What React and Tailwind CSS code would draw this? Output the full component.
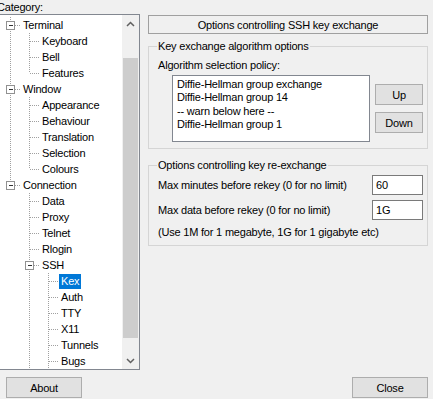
import React from 'react'

const DOT = '#a0a0a0'

// one 19x16 indent cell of the tree: I = straight, T = branch, L = last branch
function Guide({ kind, expander }) {
  const down = kind === 'L' ? 8 : 16
  return (
    <svg width="19" height="16" viewBox="0 0 19 16" className="shrink-0" shapeRendering="crispEdges">
      {kind !== ' ' && (
        <line x1="9.5" y1="0" x2="9.5" y2={down} stroke={DOT} strokeDasharray="1 1" />
      )}
      {(kind === 'T' || kind === 'L') && (
        <line x1="10" y1="8.5" x2="19" y2="8.5" stroke={DOT} strokeDasharray="1 1" />
      )}
      {expander && (
        <g>
          <rect x="5.5" y="4.5" width="8" height="8" fill="#ffffff" stroke="#919191" />
          <line x1="7.5" y1="8.5" x2="11.5" y2="8.5" stroke="#333333" />
        </g>
      )}
    </svg>
  )
}

const rows = [
  { g: ['T'], label: 'Terminal', exp: true },
  { g: ['I', 'T'], label: 'Keyboard' },
  { g: ['I', 'T'], label: 'Bell' },
  { g: ['I', 'L'], label: 'Features' },
  { g: ['T'], label: 'Window', exp: true },
  { g: ['I', 'T'], label: 'Appearance' },
  { g: ['I', 'T'], label: 'Behaviour' },
  { g: ['I', 'T'], label: 'Translation' },
  { g: ['I', 'T'], label: 'Selection' },
  { g: ['I', 'L'], label: 'Colours' },
  { g: ['L'], label: 'Connection', exp: true },
  { g: [' ', 'T'], label: 'Data' },
  { g: [' ', 'T'], label: 'Proxy' },
  { g: [' ', 'T'], label: 'Telnet' },
  { g: [' ', 'T'], label: 'Rlogin' },
  { g: [' ', 'T'], label: 'SSH', exp: true },
  { g: [' ', 'I', 'T'], label: 'Kex', selected: true },
  { g: [' ', 'I', 'T'], label: 'Auth' },
  { g: [' ', 'I', 'T'], label: 'TTY' },
  { g: [' ', 'I', 'T'], label: 'X11' },
  { g: [' ', 'I', 'T'], label: 'Tunnels' },
  { g: [' ', 'I', 'T'], label: 'Bugs' },
]

function Chevron({ up }) {
  return (
    <svg width="9" height="6" viewBox="0 0 9 6">
      <polyline
        points={up ? '1,5 4.5,1.5 8,5' : '1,1 4.5,4.5 8,1'}
        fill="none"
        stroke="#606060"
        strokeWidth="1.5"
      />
    </svg>
  )
}

function Tree() {
  return (
    <div className="flex h-[356px] border border-[#828790] bg-white">
      <div className="flex-1 pl-[3px] pt-[2px]">
        {rows.map((r) => (
          <div key={r.label} className="flex h-4 items-center">
            {r.g.map((k, i) => (
              <Guide key={i} kind={k} expander={r.exp && i === r.g.length - 1} />
            ))}
            <span
              className={
                r.selected
                  ? 'ml-[1px] flex h-[15px] items-center bg-[#0078d7] px-[2px] text-white'
                  : 'ml-[1px] px-[2px]'
              }
            >
              {r.label}
            </span>
          </div>
        ))}
      </div>
      <div className="flex w-[17px] flex-col bg-[#f0f0f0]">
        <div className="flex h-[17px] items-center justify-center">
          <Chevron up />
        </div>
        <div className="h-[26px]" />
        <div className="mx-[1px] h-[280px] bg-[#cdcdcd]" />
        <div className="flex-1" />
        <div className="flex h-[17px] items-center justify-center">
          <Chevron />
        </div>
      </div>
    </div>
  )
}

function Button({ children, className }) {
  return (
    <button
      className={
        'flex h-[21px] items-center justify-center border border-[#adadad] bg-[#e1e1e1] text-black ' +
        className
      }
    >
      {children}
    </button>
  )
}

export default function App() {
  return (
    <div
      className="flex h-[399px] w-[433px] flex-col overflow-hidden bg-[#f0f0f0] text-[11px] leading-[12px] tracking-[-0.2px] text-black"
      style={{ fontFamily: '"Liberation Sans", Arial, sans-serif' }}
    >
      <div className="flex">
        <div className="-ml-[3px] flex w-[143px] flex-col">
          <div className="h-[14px] pt-[1px]">Category:</div>
          <Tree />
        </div>

        <div className="ml-[8px] flex w-[280px] flex-col pt-[15px]">
          <div className="flex h-[19px] items-center justify-center border border-[#a0a0a0]">
            Options controlling SSH key exchange
          </div>

          <fieldset className="mt-[6px] border border-[#d5d5d5] pl-[8px] pr-[4px] pb-[6px]">
            <legend className="px-[1px]">Key exchange algorithm options</legend>
            <div className="mt-[7px] ml-[1px]">Algorithm selection policy:</div>
            <div className="mt-[4px] flex">
              <div className="ml-[15px] h-[67px] w-[198px] border border-[#828790] bg-white pl-[4px] pt-[2px] leading-[13.4px]">
                <div>Diffie-Hellman group exchange</div>
                <div>Diffie-Hellman group 14</div>
                <div>-- warn below here --</div>
                <div>Diffie-Hellman group 1</div>
              </div>
              <div className="ml-[5px] mt-[9px] flex flex-col gap-[7px]">
                <Button className="w-[48px]">Up</Button>
                <Button className="w-[48px]">Down</Button>
              </div>
            </div>
          </fieldset>

          <fieldset className="mt-[10px] border border-[#d5d5d5] pl-[8px] pr-[4px] pb-[7px]">
            <legend className="px-[1px]">Options controlling key re-exchange</legend>
            <div className="mt-[4px] flex h-[20px] items-center justify-between">
              <span className="ml-[1px]">Max minutes before rekey (0 for no limit)</span>
              <div className="flex h-[20px] w-[51px] items-center border border-[#7a7a7a] bg-white pl-[3px]">
                60
              </div>
            </div>
            <div className="mt-[5px] flex h-[20px] items-center justify-between">
              <span className="ml-[1px]">Max data before rekey (0 for no limit)</span>
              <div className="flex h-[20px] w-[51px] items-center border border-[#7a7a7a] bg-white pl-[3px]">
                1G
              </div>
            </div>
            <div className="mt-[6px] ml-[1px]">(Use 1M for 1 megabyte, 1G for 1 gigabyte etc)</div>
          </fieldset>
        </div>
      </div>

      <div className="mt-[7px] flex justify-between pl-[6px] pr-[5px]">
        <Button className="w-[76px]">About</Button>
        <Button className="w-[76px]">Close</Button>
      </div>
    </div>
  )
}
